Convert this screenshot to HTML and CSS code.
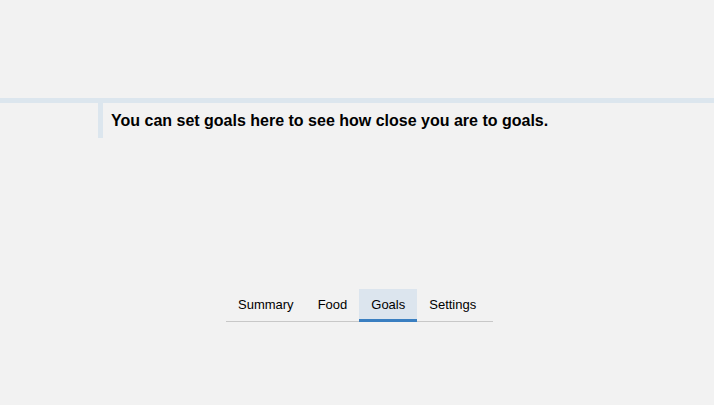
FILE: index.html
```html
<!DOCTYPE html>
<html>
<head>
<meta charset="utf-8">
<link rel="stylesheet" href="styles.css">
</head>
<body>
<div class="spacer"></div>
<div class="topbar"></div>
<div class="note">
  <h1 class="note-text">You can set goals here to see how close you are to goals.</h1>
</div>
<nav class="tabs">
  <div class="tab">Summary</div>
  <div class="tab">Food</div>
  <div class="tab active">Goals</div>
  <div class="tab">Settings</div>
</nav>
</body>
</html>
```

FILE: styles.css
```css
html, body {
  margin: 0;
  padding: 0;
  background: #f2f2f2;
  font-family: "Liberation Sans", Arial, sans-serif;
  color: #000;
}
.spacer { height: 98px; }
.topbar {
  height: 5px;
  background: #dce6ee;
}
.note {
  margin-left: 98px;
  border-left: 5px solid #dce6ee;
  height: 35px;
  padding-left: 8px;
  box-sizing: border-box;
  padding-top: 8px;
}
.note-text {
  margin: 0;
  font-size: 16px;
  line-height: 20px;
  font-weight: bold;
}
.tabs {
  margin-top: 151px;
  margin-left: 226px;
  width: 267px;
  display: flex;
  border-bottom: 1px solid #c8c8c8;
}
.tab {
  height: 29px;
  padding: 1px 12px 0;
  font-size: 13px;
  line-height: 30px;
  border-bottom: 3px solid transparent;
  margin-bottom: -1px;
}
.tab.active {
  background: #dce5ee;
  border-bottom-color: #3a7fc1;
}
```
